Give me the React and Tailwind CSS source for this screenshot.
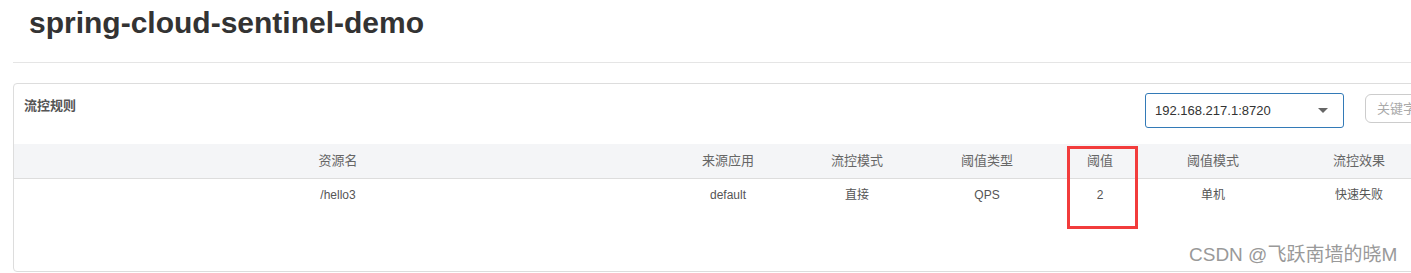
import React from "react";

const columns = [
  { label: "资源名", key: "resource" },
  { label: "来源应用", key: "limitApp" },
  { label: "流控模式", key: "strategy" },
  { label: "阈值类型", key: "grade" },
  { label: "阈值", key: "count" },
  { label: "阈值模式", key: "clusterMode" },
  { label: "流控效果", key: "controlBehavior" },
];

const rules = [
  {
    resource: "/hello3",
    limitApp: "default",
    strategy: "直接",
    grade: "QPS",
    count: "2",
    clusterMode: "单机",
    controlBehavior: "快速失败",
  },
];

const gridCols = "grid grid-cols-[648px_132px_126px_134px_92px_134px_158px]";

const App = () => {
  return (
    <div className="relative w-[1411px] h-[273px] overflow-hidden bg-white text-[#333] font-['Liberation_Sans','Noto_Sans_CJK_SC',sans-serif]">
      {/* Page title */}
      <h1 className="pl-[29px] pt-[6px] h-[62px] text-[30px] leading-[33px] font-bold text-[#333]">
        spring-cloud-sentinel-demo
      </h1>
      <div className="ml-[13px] border-t border-[#e5e5e5]"></div>

      {/* Rules card */}
      <div className="ml-[13px] mt-[20px] w-[1440px] h-[189px] border border-[#ddd] rounded-[4px]">
        <div className="flex items-start h-[60px] pt-[9px]">
          <span className="shrink-0 w-[1131px] pl-[10px] pt-[3px] text-[13px] font-semibold text-[#555] whitespace-nowrap">流控规则</span>

          <div className="shrink-0 flex items-center w-[199px] h-[35px] border border-[#337ab7] rounded-[3px] pl-[9px] pr-[15px]">
            <span className="flex-1 text-[13px] text-[#333] whitespace-nowrap">192.168.217.1:8720</span>
            <span className="w-0 h-0 border-l-[5px] border-r-[5px] border-t-[5px] border-l-transparent border-r-transparent border-t-[#666]"></span>
          </div>

          <div className="shrink-0 ml-[21px] mt-[1px] flex items-center w-[120px] h-[29px] border border-[#ccc] rounded-[6px] pl-[11px]">
            <span className="text-[13px] text-[#aaa] whitespace-nowrap">关键字</span>
          </div>
        </div>

        {/* Table */}
        <div className={`${gridCols} h-[35px] items-center bg-[#f4f5f7] border-b border-[#ddd] text-[13px] text-[#666]`}>
          {columns.map((c) => (
            <div key={c.key} className="text-center">{c.label}</div>
          ))}
        </div>
        {rules.map((r, i) => (
          <div key={i} className={`${gridCols} h-[32px] items-center text-[12px] text-[#555]`}>
            {columns.map((c) => (
              <div key={c.key} className="text-center">{r[c.key]}</div>
            ))}
          </div>
        ))}
      </div>

      {/* Annotation box */}
      <div className="absolute left-[1067px] top-[146px] w-[71px] h-[83px] border-[3px] border-[#f23c3c]"></div>

      {/* Watermark */}
      <div className="absolute left-[1189px] top-[243px] text-[19px] leading-[24px] text-[#999] [text-shadow:0_0_2px_#fff] whitespace-nowrap">
        CSDN @飞跃南墙的晓M
      </div>
    </div>
  );
};

export default App;
